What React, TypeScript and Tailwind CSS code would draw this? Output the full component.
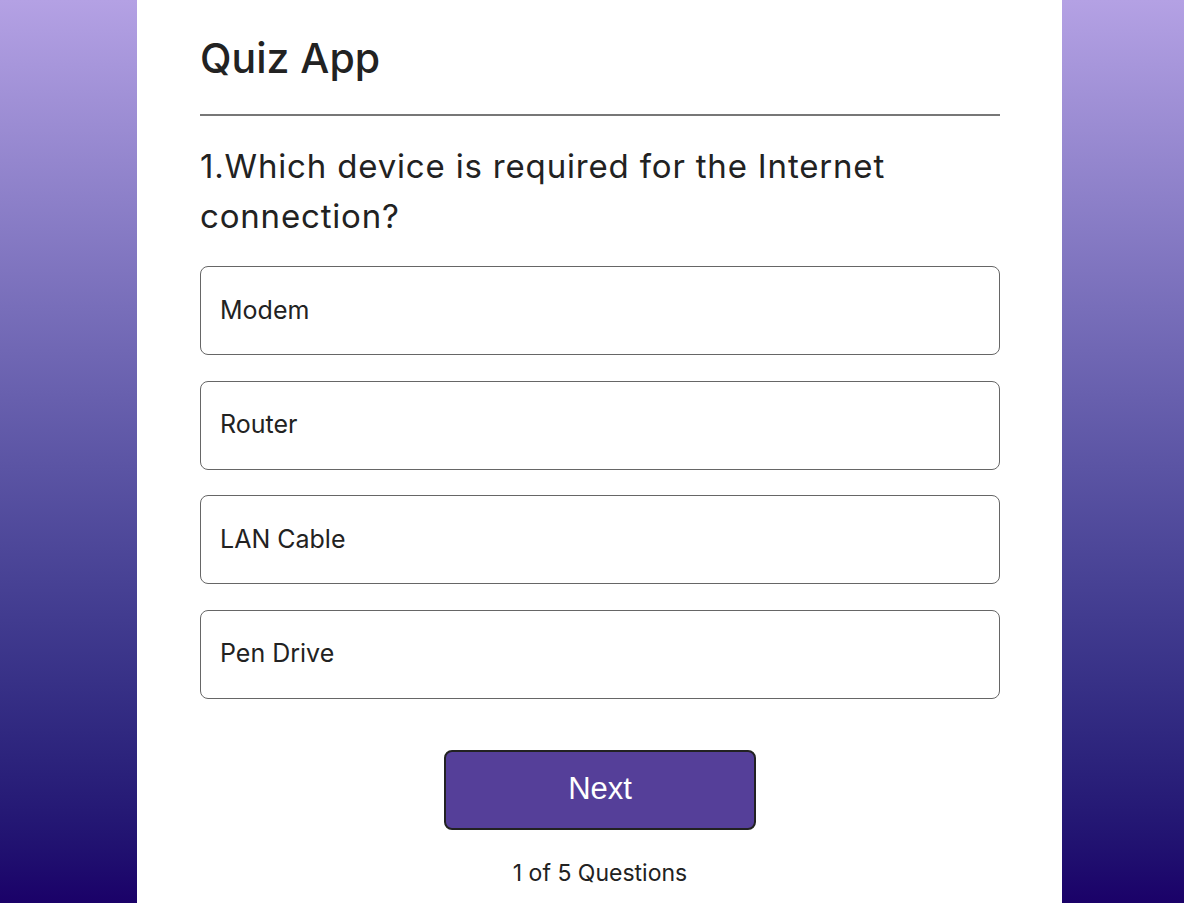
import { useState } from 'react'

const options = ['Modem', 'Router', 'LAN Cable', 'Pen Drive']

export default function App() {
  const [picked, setPicked] = useState<number | null>(null)

  return (
    <div className="min-h-screen bg-gradient-to-b from-[#b4a1e4] to-[#1a0068] font-['Inter',sans-serif] text-[#222]">
      <div className="ml-[137px] w-[925px] min-h-screen bg-white pl-[63px] pr-[62px] pt-[30px] pb-[20px]">
        <h1 className="text-[41px] leading-[56px] font-medium pb-[28px] border-b-2 border-[#777]">Quiz App</h1>

        <h2 className="mt-[25px] text-[33px] leading-[50px] font-normal tracking-[0.025em]">
          1.Which device is required for the Internet connection?
        </h2>

        <div className="mt-[25px] flex flex-col gap-[25.5px]">
          {options.map((o, i) => (
            <button
              key={o}
              onClick={() => setPicked(i)}
              className={`h-[89px] w-full text-left px-[19px] text-[25px] rounded-lg border border-[#666] ${picked === i ? 'bg-[#e6e0f5]' : 'bg-white'}`}
            >
              {o}
            </button>
          ))}
        </div>

        <div className="mt-[51px] flex justify-center">
          <button className="w-[312px] h-[80px] rounded-lg border-2 border-[#222] bg-[#553f99] text-white text-[31px] font-['Liberation_Sans',Arial,sans-serif]">
            Next
          </button>
        </div>

        <p className="mt-[29px] text-center text-[23px] leading-[28px]">1 of 5 Questions</p>
      </div>
    </div>
  )
}
